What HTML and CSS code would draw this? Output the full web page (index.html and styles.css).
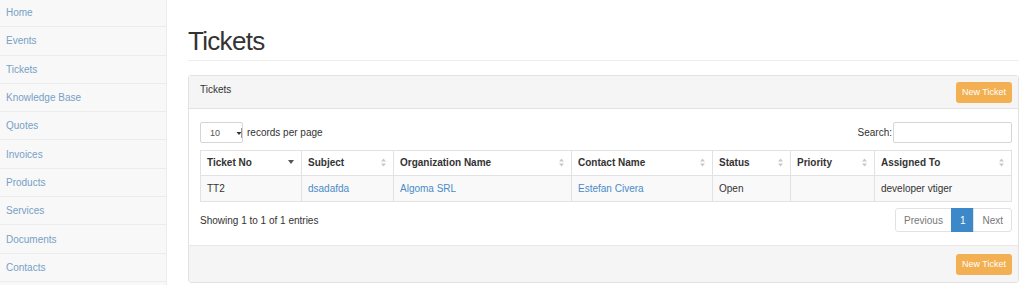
FILE: index.html
```html
<!DOCTYPE html>
<html lang="en">
<head>
    <meta charset="UTF-8">
    <meta name="viewport" content="width=device-width, initial-scale=1.0">
    <title>Tickets</title>
    <link rel="stylesheet" href="styles.css">
</head>
<body>
    <div class="sidebar">
        <ul class="nav">
            <li><a href="#">Home</a></li>
            <li><a href="#">Events</a></li>
            <li><a href="#">Tickets</a></li>
            <li><a href="#">Knowledge Base</a></li>
            <li><a href="#">Quotes</a></li>
            <li><a href="#">Invoices</a></li>
            <li><a href="#">Products</a></li>
            <li><a href="#">Services</a></li>
            <li><a href="#">Documents</a></li>
            <li><a href="#">Contacts</a></li>
        </ul>
    </div>

    <div class="main">
        <h1 class="page-title">Tickets</h1>

        <div class="panel">
            <div class="panel-heading">
                <span class="panel-title">Tickets</span>
                <a href="#" class="btn-new">New Ticket</a>
            </div>

            <div class="panel-body">
                <div class="table-top">
                    <div class="length">
                        <div class="select-box">
                            <span>10</span>
                            <svg width="6" height="10" viewBox="0 0 6 10"><path d="M0.5 4 L3 7 L5.5 4 Z" fill="#333"/><line x1="5.5" y1="0" x2="5.5" y2="10" stroke="#999"/></svg>
                        </div>
                        <span>records per page</span>
                    </div>
                    <div class="search">
                        <label for="q">Search:</label>
                        <input type="text" id="q">
                    </div>
                </div>

                <table class="tickets">
                    <thead>
                        <tr>
                            <th class="c-no"><div class="th-in"><span>Ticket No</span><svg width="6" height="4" viewBox="0 0 6 4"><path d="M0 0 L6 0 L3 4 Z" fill="#555"/></svg></div></th>
                            <th class="c-subj"><div class="th-in"><span>Subject</span><svg width="5" height="9" viewBox="0 0 5 9"><path d="M0 3.5 L2.5 0.5 L5 3.5 Z M0 5.5 L2.5 8.5 L5 5.5 Z" fill="#c8c8c8"/></svg></div></th>
                            <th class="c-org"><div class="th-in"><span>Organization Name</span><svg width="5" height="9" viewBox="0 0 5 9"><path d="M0 3.5 L2.5 0.5 L5 3.5 Z M0 5.5 L2.5 8.5 L5 5.5 Z" fill="#c8c8c8"/></svg></div></th>
                            <th class="c-contact"><div class="th-in"><span>Contact Name</span><svg width="5" height="9" viewBox="0 0 5 9"><path d="M0 3.5 L2.5 0.5 L5 3.5 Z M0 5.5 L2.5 8.5 L5 5.5 Z" fill="#c8c8c8"/></svg></div></th>
                            <th class="c-status"><div class="th-in"><span>Status</span><svg width="5" height="9" viewBox="0 0 5 9"><path d="M0 3.5 L2.5 0.5 L5 3.5 Z M0 5.5 L2.5 8.5 L5 5.5 Z" fill="#c8c8c8"/></svg></div></th>
                            <th class="c-prio"><div class="th-in"><span>Priority</span><svg width="5" height="9" viewBox="0 0 5 9"><path d="M0 3.5 L2.5 0.5 L5 3.5 Z M0 5.5 L2.5 8.5 L5 5.5 Z" fill="#c8c8c8"/></svg></div></th>
                            <th class="c-assign"><div class="th-in"><span>Assigned To</span><svg width="5" height="9" viewBox="0 0 5 9"><path d="M0 3.5 L2.5 0.5 L5 3.5 Z M0 5.5 L2.5 8.5 L5 5.5 Z" fill="#c8c8c8"/></svg></div></th>
                        </tr>
                    </thead>
                    <tbody>
                        <tr>
                            <td>TT2</td>
                            <td><a href="#">dsadafda</a></td>
                            <td><a href="#">Algoma SRL</a></td>
                            <td><a href="#">Estefan Civera</a></td>
                            <td>Open</td>
                            <td></td>
                            <td>developer vtiger</td>
                        </tr>
                    </tbody>
                </table>

                <div class="table-bottom">
                    <span>Showing 1 to 1 of 1 entries</span>
                    <ul class="pager">
                        <li><a href="#">Previous</a></li>
                        <li class="active"><a href="#">1</a></li>
                        <li><a href="#">Next</a></li>
                    </ul>
                </div>
            </div>

            <div class="panel-footer">
                <a href="#" class="btn-new">New Ticket</a>
            </div>
        </div>
    </div>
</body>
</html>
```

FILE: styles.css
```css
body {
    font-family: "Liberation Sans", Arial, sans-serif;
    font-size: 10px;
    color: #333;
    margin: 0;
    padding: 0;
    display: flex;
    height: 100vh;
    overflow: hidden;
    background-color: #fff;
}
a {
    text-decoration: none;
}

/* sidebar */
.sidebar {
    width: 166px;
    background-color: #f8f8f8;
    border-right: 1px solid #ececec;
}
.nav {
    list-style: none;
    margin: -1px 0 0 0;
    padding: 0;
}
.nav li {
    height: 28.3px;
    box-sizing: border-box;
    border-bottom: 1px solid #ececec;
    display: flex;
    align-items: center;
    padding-left: 6px;
}
.nav a {
    color: #77a0c6;
}

/* main */
.main {
    flex: 1;
    padding: 0 5px 0 21px;
}
.page-title {
    font-size: 26px;
    font-weight: normal;
    letter-spacing: -0.7px;
    line-height: 30px;
    margin: 26px 0 0;
    padding-bottom: 4px;
    border-bottom: 1px solid #eeeeee;
    color: #333;
}

.panel {
    margin-top: 14px;
    border: 1px solid #e2e2e2;
    border-radius: 3px;
    background-color: #fff;
}
.panel-heading {
    height: 32px;
    background-color: #f5f5f5;
    border-bottom: 1px solid #e2e2e2;
    display: flex;
    align-items: center;
    justify-content: space-between;
    padding: 0 6px 0 11px;
}
.panel-title {
    margin-top: -6px;
}
.btn-new {
    display: inline-flex;
    align-items: center;
    height: 21px;
    padding: 0 6px;
    background-color: #f2b052;
    color: #fff;
    font-size: 9px;
    border-radius: 3px;
}

.panel-body {
    padding: 13px 6px 13px 11px;
}
.table-top {
    display: flex;
    justify-content: space-between;
    align-items: center;
    height: 21px;
}
.length {
    display: flex;
    align-items: center;
    gap: 4px;
}
.select-box {
    width: 43px;
    height: 21px;
    box-sizing: border-box;
    border: 1px solid #d5d5d5;
    border-radius: 2px;
    display: flex;
    align-items: center;
    justify-content: space-between;
    padding: 0 0 0 9px;
    font-size: 9px;
    color: #555;
}
.search {
    display: flex;
    align-items: center;
    gap: 1px;
    color: #333;
}
.search input {
    width: 119px;
    height: 21px;
    box-sizing: border-box;
    border: 1px solid #d5d5d5;
    border-radius: 2px;
    padding: 0 4px;
    margin: 0;
}

.tickets {
    width: 100%;
    margin-top: 7px;
    border-collapse: collapse;
    table-layout: fixed;
}
.tickets th,
.tickets td {
    box-sizing: border-box;
    border: 1px solid #e2e2e2;
    text-align: left;
    padding: 0 0 0 6px;
}
.tickets th {
    height: 25px;
    font-weight: bold;
    padding-bottom: 2px;
}
.tickets td {
    height: 26px;
    background-color: #f9f9f9;
}
.tickets td a {
    color: #4a8bc6;
}
.th-in {
    display: flex;
    justify-content: space-between;
    align-items: center;
    padding-right: 7px;
}
.c-no { width: 101px; }
.c-subj { width: 92px; }
.c-org { width: 178px; }
.c-contact { width: 141px; }
.c-status { width: 78px; }
.c-prio { width: 84px; }

.table-bottom {
    margin-top: 6px;
    display: flex;
    justify-content: space-between;
    align-items: center;
}
.pager {
    list-style: none;
    margin: 0;
    padding: 0;
    display: flex;
}
.pager li a {
    display: flex;
    align-items: center;
    height: 24px;
    box-sizing: border-box;
    padding: 0 8px;
    border: 1px solid #e2e2e2;
    margin-left: -1px;
    color: #777;
}
.pager li:first-child a {
    border-radius: 3px 0 0 3px;
}
.pager li:last-child a {
    border-radius: 0 3px 3px 0;
}
.pager li.active a {
    background-color: #3d88c9;
    border-color: #3d88c9;
    color: #fff;
}

.panel-footer {
    height: 36px;
    background-color: #f5f5f5;
    border-top: 1px solid #e8e8e8;
    display: flex;
    align-items: center;
    justify-content: flex-end;
    padding: 0 6px;
}
```
